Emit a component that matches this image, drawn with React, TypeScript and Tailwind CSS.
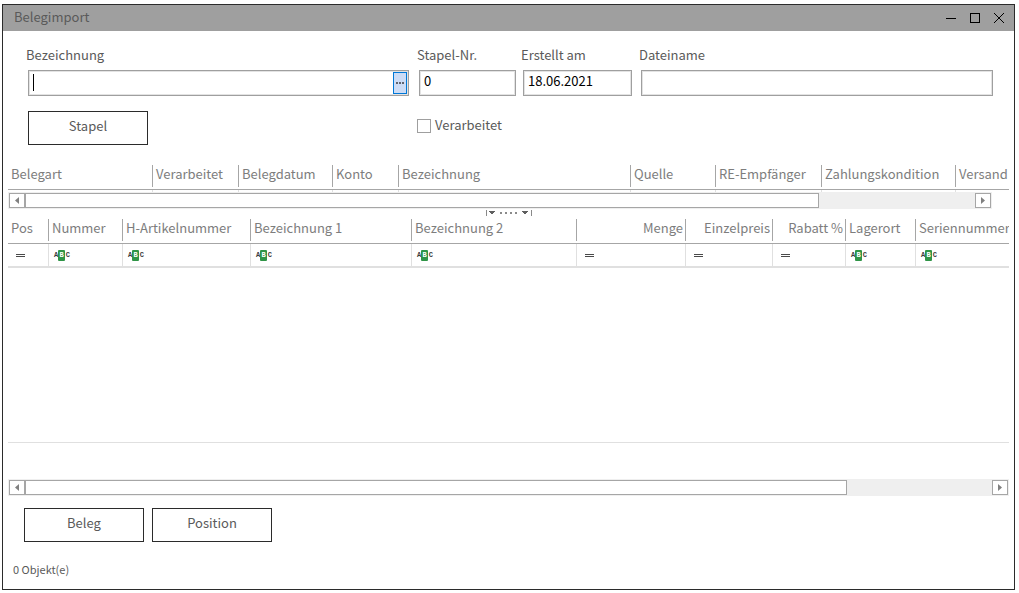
import React from 'react';

type Column = {
  title: string;
  width?: string;
  filter?: 'text' | 'number';
};

const belegColumns: Column[] = [
  { title: 'Belegart', width: 'w-[145px]' },
  { title: 'Verarbeitet', width: 'w-[86px]' },
  { title: 'Belegdatum', width: 'w-[94px]' },
  { title: 'Konto', width: 'w-[66px]' },
  { title: 'Bezeichnung', width: 'w-[232px]' },
  { title: 'Quelle', width: 'w-[85px]' },
  { title: 'RE-Empfänger', width: 'w-[106px]' },
  { title: 'Zahlungskondition', width: 'w-[134px]' },
  { title: 'Versand' },
];

const positionColumns: Column[] = [
  { title: 'Pos', width: 'w-[41px]', filter: 'number' },
  { title: 'Nummer', width: 'w-[74px]', filter: 'text' },
  { title: 'H-Artikelnummer', width: 'w-[128px]', filter: 'text' },
  { title: 'Bezeichnung 1', width: 'w-[161px]', filter: 'text' },
  { title: 'Bezeichnung 2', width: 'w-[165px]', filter: 'text' },
  { title: 'Menge', width: 'w-[109px]', filter: 'number' },
  { title: 'Einzelpreis', width: 'w-[87px]', filter: 'number' },
  { title: 'Rabatt %', width: 'w-[73px]', filter: 'number' },
  { title: 'Lagerort', width: 'w-[70px]', filter: 'text' },
  { title: 'Seriennummer', filter: 'text' },
];

const rightAligned = ['Menge', 'Einzelpreis', 'Rabatt %'];

const fieldClass =
  'block h-[26px] w-full border border-[#9f9f9f] bg-white px-1 pb-1.5 text-black shadow-[inset_0_0_0_1px_#e3e3e3] outline-none';

function HeaderRow({ columns }: { columns: Column[] }) {
  return (
    <tr>
      {columns.map((col, i) => (
        <th
          key={col.title}
          scope="col"
          className={`h-[25px] overflow-hidden border-b border-[#a6a6a6] p-0 pb-0.5 align-top font-normal text-[#7d7d7d] ${col.width ?? ''}`}
        >
          <div
            className={`h-[22px] whitespace-nowrap pl-[3px] pr-0.5 leading-[18px] ${
              rightAligned.includes(col.title) ? 'text-right' : 'text-left'
            } ${i < columns.length - 1 ? 'border-r border-[#a6a6a6]' : ''}`}
          >
            {col.title}
          </div>
        </th>
      ))}
    </tr>
  );
}

function FilterIcon({ type }: { type: 'text' | 'number' }) {
  if (type === 'number') {
    return (
      <svg width="9" height="3" shapeRendering="crispEdges" className="ml-[3px]">
        <path d="M0 0h9v1H0zM0 2h9v1H0z" fill="#4a4a4a" />
      </svg>
    );
  }
  return (
    <span className="flex h-[11px] items-center font-['Liberation_Mono',monospace] text-[7px] font-bold leading-[11px] text-[#3c3c3c]">
      <span className="w-1">A</span>
      <span className="w-[7px] rounded-[1px] bg-[#2f9447] text-center text-white">B</span>
      <span className="w-[5px] text-right">C</span>
    </span>
  );
}

function ScrollBar({ label, visible, total }: { label: string; visible: number; total: number }) {
  return (
    <div role="group" aria-label={label} className="flex h-[17px] bg-[#efefef] p-px">
      <button
        aria-label="Nach links"
        className="flex w-4 items-center justify-center border border-[#a6a6a6] bg-white"
      >
        <svg width="4" height="7">
          <path d="M4 0v7L0 3.5z" fill="#808080" />
        </svg>
      </button>
      <div className="flex-1">
        <div
          className="h-full border border-[#a6a6a6] bg-white"
          style={{ width: `${(visible / total) * 100}%` }}
        />
      </div>
      <button
        aria-label="Nach rechts"
        className="flex w-4 items-center justify-center border border-[#a6a6a6] bg-white"
      >
        <svg width="4" height="7">
          <path d="M0 0v7l4-3.5z" fill="#808080" />
        </svg>
      </button>
    </div>
  );
}

function ActionButton({ children }: { children: React.ReactNode }) {
  return (
    <button className="h-[34px] w-[120px] border border-[#2b2b2b] bg-white pb-1 text-[#5a5a5a]">
      {children}
    </button>
  );
}

export default function App() {
  return (
    <div className="flex min-h-screen bg-white pb-[3px] pl-0.5 pr-1 pt-1 font-['Noto_Sans_CJK_SC',sans-serif] text-[13px] leading-5 text-[#5a5a5a]">
      <div className="flex min-w-0 flex-1 flex-col border border-[#2b2b2b]">
        <header className="flex h-[26px] items-center justify-between bg-[#9f9f9f] pl-[11px] pr-2.5">
          <h1 className="pb-0.5">Belegimport</h1>
          <div className="flex gap-3.5">
            <button aria-label="Minimieren">
              <svg width="10" height="10" shapeRendering="crispEdges">
                <path d="M0 5h10v1H0z" />
              </svg>
            </button>
            <button aria-label="Maximieren">
              <svg width="10" height="10" shapeRendering="crispEdges">
                <path d="M0 0h10v10H0zM1 1v8h8V1z" fillRule="evenodd" />
              </svg>
            </button>
            <button aria-label="Schließen">
              <svg width="10" height="10">
                <path d="M0 0l10 10M10 0L0 10" stroke="#000" />
              </svg>
            </button>
          </div>
        </header>

        <section className="grid grid-cols-[391fr_104px_118px_354fr] pl-[23px] pr-[21px] pt-3.5">
          <div className="pr-2">
            <label htmlFor="bezeichnung">Bezeichnung</label>
            <div className="ml-0.5 mt-[5px] flex h-[26px] border border-[#9f9f9f] p-px shadow-[inset_0_0_0_1px_#e3e3e3]">
              <div className="relative flex-1">
                <input id="bezeichnung" className="h-full w-full bg-transparent px-1 outline-none" />
                <span className="absolute left-[3px] top-0.5 h-[17px] w-px bg-black" />
              </div>
              <button
                aria-label="Bezeichnung auswählen"
                className="flex w-3.5 items-center justify-center border border-[#0078d7] bg-[#ccdcf6]"
              >
                <svg width="8" height="2" shapeRendering="crispEdges">
                  <path d="M0 0h2v2H0zM3 0h2v2H3zM6 0h2v2H6z" fill="#5f6470" />
                </svg>
              </button>
            </div>
          </div>
          <div className="pr-[5px]">
            <label htmlFor="stapelnr">Stapel-Nr.</label>
            <div className="ml-0.5 mt-[5px]">
              <input id="stapelnr" defaultValue="0" className={fieldClass} />
            </div>
          </div>
          <div className="pr-[7px]">
            <label htmlFor="erstellt">Erstellt am</label>
            <div className="ml-0.5 mt-[5px]">
              <input id="erstellt" defaultValue="18.06.2021" className={fieldClass} />
            </div>
          </div>
          <div>
            <label htmlFor="dateiname">Dateiname</label>
            <div className="ml-0.5 mt-[5px]">
              <input id="dateiname" className={fieldClass} />
            </div>
          </div>

          <div className="pl-0.5 pt-[15px]">
            <ActionButton>Stapel</ActionButton>
          </div>
          <label className="col-span-3 flex items-center gap-1 self-start pt-[19px]">
            <input
              type="checkbox"
              className="mt-0.5 size-3.5 appearance-none border border-[#9f9f9f] bg-white"
            />
            Verarbeitet
          </label>
        </section>

        <main className="flex flex-1 flex-col px-[5px] pt-5">
          <table className="w-full table-fixed border-separate border-spacing-0">
            <thead>
              <HeaderRow columns={belegColumns} />
            </thead>
            <tbody>
              <tr>
                {belegColumns.map((col) => (
                  <td key={col.title} className="h-0.5 border-r border-[#e0e0e0] p-0 last:border-r-0" />
                ))}
              </tr>
            </tbody>
          </table>
          <div className="pr-[17px]">
            <ScrollBar label="Belege scrollen" visible={794} total={950} />
          </div>

          <div className="flex h-2.5 justify-center pt-px">
            <svg width="46" height="6" shapeRendering="crispEdges" fill="#5f5f5f">
              <path d="M0 0h1v6H0zM45 0h1v6h-1z" fill="#8a8a8a" />
              <path d="M3 1h6v1H3zM4 2h4v1H4zM5 3h2v1H5zM36 1h6v1h-6zM37 2h4v1h-4zM38 3h2v1h-2z" />
              <path d="M14 2h2v2h-2zM19 2h2v2h-2zM24 2h2v2h-2zM29 2h2v2h-2z" fill="#8a8a8a" />
            </svg>
          </div>

          <div className="flex flex-1 flex-col border-b border-[#e0e0e0]">
            <table className="w-full table-fixed border-separate border-spacing-0">
              <thead>
                <HeaderRow columns={positionColumns} />
              </thead>
              <tbody>
                <tr>
                  {positionColumns.map((col) => (
                    <td
                      key={col.title}
                      className="h-6 border-b-2 border-r border-[#e0e0e0] p-0 last:border-r-0"
                    >
                      <div className="flex h-[22px] items-center pl-[5px]">
                        <button aria-label={`Filter ${col.title}`} className="shrink-0">
                          <FilterIcon type={col.filter ?? 'text'} />
                        </button>
                        <input
                          aria-label={`Filterwert ${col.title}`}
                          className="h-5 w-full min-w-0 bg-transparent px-1 outline-none"
                        />
                      </div>
                    </td>
                  ))}
                </tr>
              </tbody>
            </table>
          </div>

          <div className="pt-9">
            <ScrollBar label="Positionen scrollen" visible={822} total={967} />
          </div>
        </main>

        <div className="flex gap-2 px-[21px] pt-3">
          <ActionButton>Beleg</ActionButton>
          <ActionButton>Position</ActionButton>
        </div>
        <footer className="px-2.5 pb-2.5 pt-[17px] text-[11px]">0 Objekt(e)</footer>
      </div>
    </div>
  );
}
